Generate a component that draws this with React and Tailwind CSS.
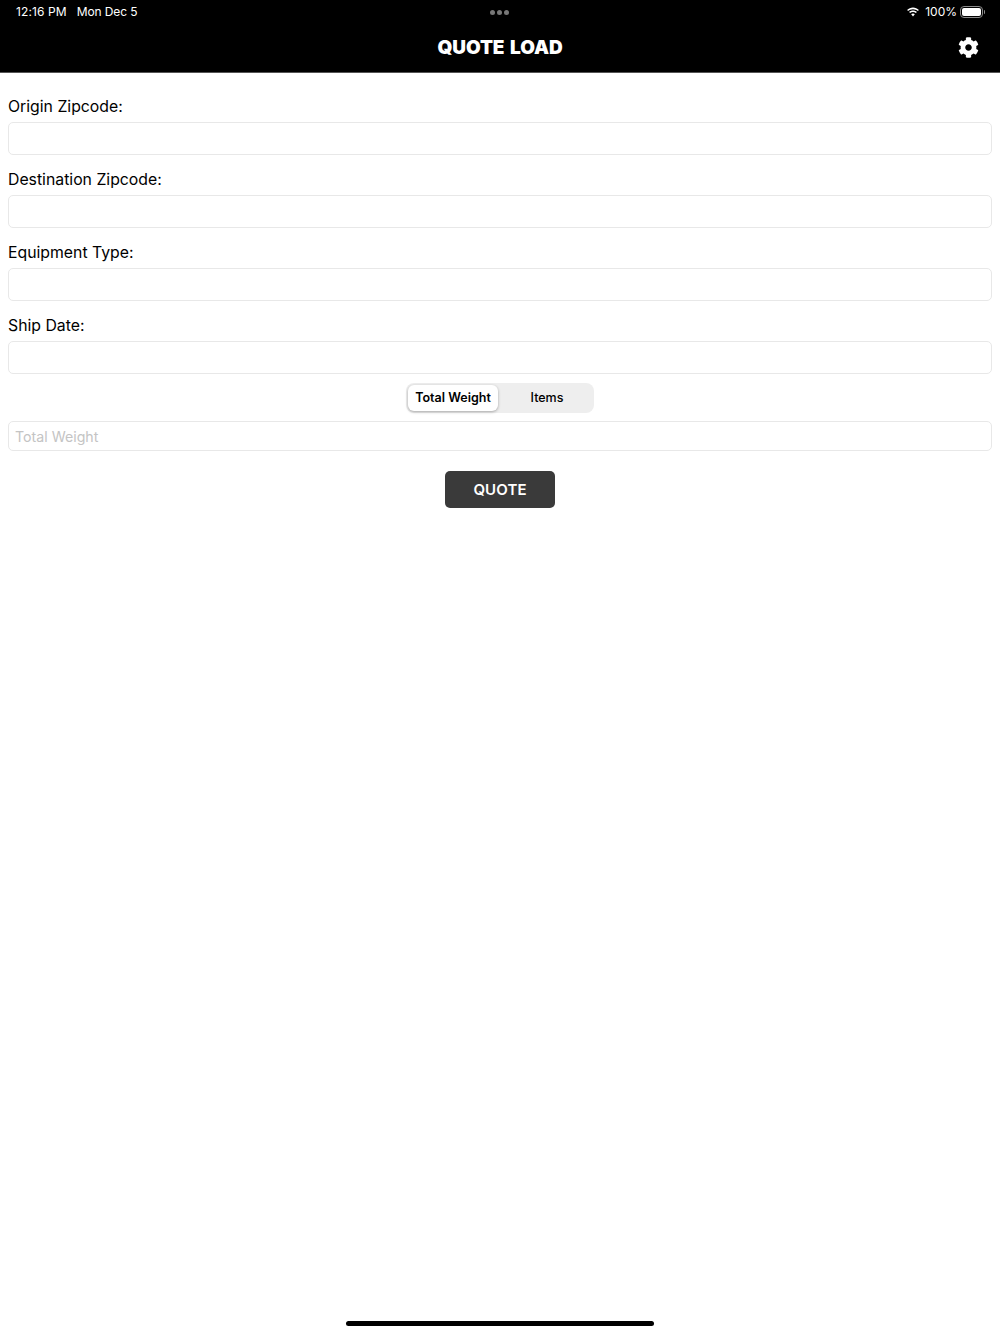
import { FaCog } from "react-icons/fa";

function StatusBar() {
  return (
    <div className="grid h-[24px] grid-cols-3 items-center pl-[16px] pr-[15px] text-[12px] text-white">
      <div className="flex gap-[10px]">
        <span className="tracking-[0.1px]">12:16 PM</span>
        <span className="tracking-[-0.1px]">Mon Dec 5</span>
      </div>
      <div className="flex items-center justify-center gap-[2px] pr-[2px]">
        <span className="h-[5px] w-[5px] rounded-full bg-[#777]" />
        <span className="h-[5px] w-[5px] rounded-full bg-[#777]" />
        <span className="h-[5px] w-[5px] rounded-full bg-[#777]" />
      </div>
      <div className="flex items-center justify-end">
        <svg className="mr-[5px]" width="14" height="10" viewBox="0 0 14 10" fill="white">
          <path d="M7 2.2c1.900 0 3.600.7 4.900 1.900l1-1.100C11.300 1.500 9.300.6 7 .6S2.700 1.500 1.100 3l1 1.100C3.400 2.900 5.100 2.200 7 2.200z" />
          <path d="M7 5c1.100 0 2.100.4 2.900 1.100l1-1.100C9.800 4 8.500 3.500 7 3.500S4.200 4 3.100 5l1 1.100C4.900 5.400 5.900 5 7 5z" />
          <path d="M7 6.600c-.7 0-1.300.3-1.800.7L7 9.400l1.800-2.100c-.5-.4-1.100-.7-1.800-.7z" />
        </svg>
        <span className="mr-[3px]">100%</span>
        <div className="flex items-center">
          <div className="h-[12px] w-[23px] rounded-[4px] border border-[#8a8a8a] p-[1px]">
            <div className="h-full w-full rounded-[2px] bg-white" />
          </div>
          <div className="ml-[1px] h-[4px] w-[1px] rounded-r-full bg-[#8a8a8a]" />
        </div>
      </div>
    </div>
  );
}

function Field({ label, className }) {
  return (
    <div className={className}>
      <label className="mb-[4px] block text-[15.8px] leading-[22px] text-black">{label}</label>
      <input className="block h-[33px] w-full rounded-[5px] border border-[#e8e8e8] bg-white" />
    </div>
  );
}

export default function App() {
  return (
    <div className="flex h-[1334px] flex-col bg-white font-['Inter',sans-serif]">
      <header className="h-[73px] border-b border-[#555] bg-black">
        <StatusBar />
        <div className="grid h-[47px] grid-cols-[1fr_auto_1fr] items-center pr-[21px]">
          <div />
          <h1 className="pt-[2px] pl-[21px] text-[19px] font-black tracking-[-0.1px] text-white [word-spacing:2px]">QUOTE LOAD</h1>
          <FaCog className="justify-self-end text-[21px] text-white" />
        </div>
      </header>

      <main className="px-[8px] pt-[23px]">
        <Field label="Origin Zipcode:" className="mb-[14px]" />
        <Field label="Destination Zipcode:" className="mb-[14px]" />
        <Field label="Equipment Type:" className="mb-[14px]" />
        <Field label="Ship Date:" />

        <div className="mt-[9px] flex justify-center">
          <div className="flex h-[30px] w-[188px] rounded-[8px] bg-[#eeeeee] p-[2px]">
            <button className="h-[26px] w-[90px] rounded-[6px] bg-white text-[12.5px] font-semibold text-black shadow-[0_1px_3px_rgba(0,0,0,0.3)]">
              Total Weight
            </button>
            <button className="h-[26px] flex-1 pl-[4px] text-[12.5px] font-medium text-black">Items</button>
          </div>
        </div>

        <input
          placeholder="Total Weight"
          className="mt-[8px] block h-[30px] w-full rounded-[5px] border border-[#e8e8e8] bg-white px-[6px] text-[14.2px] placeholder:text-[#c4c4c4]"
        />

        <div className="mt-[20px] flex justify-center">
          <button className="h-[37px] w-[110px] rounded-[5px] bg-[#3a3a3a] pt-[1px] text-[15px] font-semibold tracking-[0.1px] text-white">
            QUOTE
          </button>
        </div>
      </main>

      <div className="mb-[8px] mt-auto flex justify-center">
        <div className="h-[5px] w-[308px] rounded-full bg-black" />
      </div>
    </div>
  );
}
